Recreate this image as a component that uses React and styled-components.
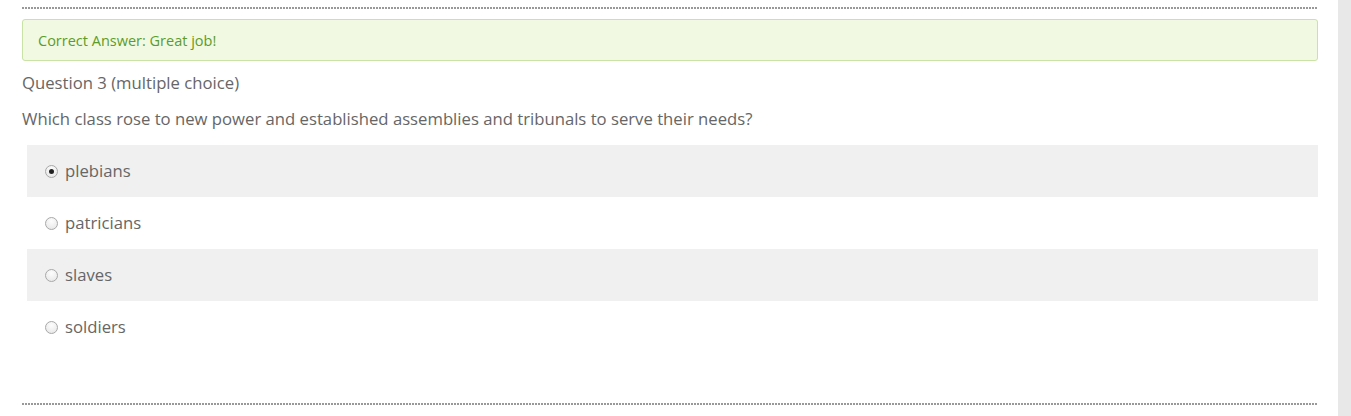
import styled, { createGlobalStyle } from "styled-components";

const GlobalStyle = createGlobalStyle`
  body {
    margin: 0;
    background: #fff;
    font-family: "Open Sans", "Liberation Sans", sans-serif;
  }
`;

const Page = styled.div`
  display: flex;
  height: 416px;
  overflow: hidden;
`;

const Main = styled.div`
  flex: 1;
  padding: 7px 20px 0 22px;
`;

const SideStrip = styled.div`
  width: 13px;
  background: #e8e8e8;
`;

const DottedRule = styled.div`
  height: 2px;
  background: repeating-linear-gradient(
    to right,
    #999 0,
    #999 2px,
    transparent 2px,
    transparent 3px
  );
`;

const Alert = styled.div`
  margin-top: 10px;
  height: 42px;
  box-sizing: border-box;
  border: 1px solid #c9e2a5;
  border-radius: 3px;
  background: #f2f9e3;
  color: #5b9c2b;
  font-size: 14.5px;
  display: flex;
  align-items: center;
  padding-left: 15px;
`;

const QuestionTitle = styled.div`
  margin-top: 11px;
  font-size: 16.7px;
  line-height: 22px;
  color: #666;
`;

const QuestionText = styled.div`
  margin-top: 14px;
  font-size: 16.7px;
  line-height: 22px;
  color: #666;
`;

const Options = styled.div`
  margin: 15px 0 0 5px;
  display: flex;
  flex-direction: column;
`;

const Option = styled.label`
  height: 52px;
  box-sizing: border-box;
  padding: 0 0 2px 18px;
  display: flex;
  align-items: center;
  gap: 7px;
  background: ${(p) => (p.$shaded ? "#f0f0f0" : "#fff")};
  font-size: 16.7px;
  color: #666;
  cursor: pointer;
`;

const Radio = styled.span`
  width: 11px;
  height: 11px;
  border-radius: 50%;
  border: 1px solid #a8a8a8;
  background: radial-gradient(circle at 50% 30%, #fdfdfd 0, #e4e4e4 100%);
  display: flex;
  align-items: center;
  justify-content: center;
  flex-shrink: 0;
  margin-top: 2px;

  &::after {
    content: "";
    width: 5px;
    height: 5px;
    border-radius: 50%;
    background: #222;
    display: ${(p) => (p.$checked ? "block" : "none")};
  }
`;

const Spacer = styled.div`
  height: 50px;
`;

const answers = ["plebians", "patricians", "slaves", "soldiers"];

export default function App() {
  return (
    <Page>
      <GlobalStyle />
      <Main>
        <DottedRule />
        <Alert>Correct Answer: Great job!</Alert>
        <QuestionTitle>Question 3 (multiple choice)</QuestionTitle>
        <QuestionText>
          Which class rose to new power and established assemblies and tribunals to serve their needs?
        </QuestionText>
        <Options>
          {answers.map((a, i) => (
            <Option key={a} $shaded={i % 2 === 0}>
              <Radio $checked={i === 0} />
              {a}
            </Option>
          ))}
        </Options>
        <Spacer />
        <DottedRule />
      </Main>
      <SideStrip />
    </Page>
  );
}
